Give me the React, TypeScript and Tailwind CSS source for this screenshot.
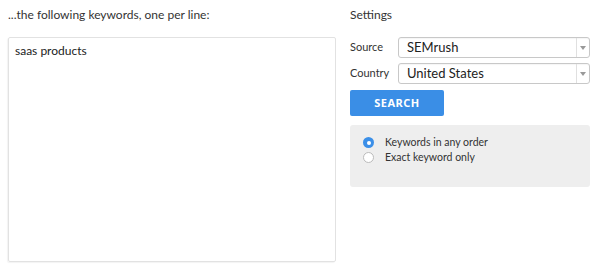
const Select = ({ value }: { value: string }) => (
  <div className="flex-1 flex h-[21px] border border-[#c8c8c8] rounded-[3px] bg-white shadow-[inset_0_1px_1px_rgba(0,0,0,0.04)]">
    <span className="flex-1 pl-[8px] text-[13px] leading-[19px] text-[#222]">{value}</span>
    <span className="w-[13px] border-l border-[#e0e0e0] flex items-center justify-center">
      <svg width="6" height="4" viewBox="0 0 6 4"><path d="M0 0h6L3 4z" fill="#999" /></svg>
    </span>
  </div>
)

const Radio = ({ checked, label }: { checked?: boolean; label: string }) => (
  <div className="flex items-center h-[15px]">
    {checked ? (
      <span className="w-[11px] h-[11px] rounded-full bg-[#3b8fe8] flex items-center justify-center">
        <span className="w-[4px] h-[4px] rounded-full bg-white" />
      </span>
    ) : (
      <span className="w-[11px] h-[11px] rounded-full border border-[#bbb] bg-white" />
    )}
    <span className="ml-[11px] text-[10.5px] text-[#333]">{label}</span>
  </div>
)

export default function App() {
  return (
    <div className="w-[600px] h-[272px] bg-white flex font-['Lato',sans-serif] text-[#333]">
      <div className="w-[328px] ml-[8px] flex flex-col">
        <p className="mt-[6px] text-[12px] leading-[18px]">...the following keywords, one per line:</p>
        <div className="mt-[13px] h-[225px] border border-[#e2e2e2] rounded-[2px] shadow-[-1px_1px_1px_rgba(0,0,0,0.05)] px-[6px] py-[5px]">
          <p className="text-[12px] leading-[16px] text-[#222]">saas products</p>
        </div>
      </div>
      <div className="w-[240px] ml-[14px] flex flex-col">
        <p className="mt-[6px] text-[12px] leading-[18px]">Settings</p>
        <div className="mt-[13px] flex items-center">
          <span className="w-[48px] text-[11px]">Source</span>
          <Select value="SEMrush" />
        </div>
        <div className="mt-[5px] flex items-center">
          <span className="w-[48px] text-[11px]">Country</span>
          <Select value="United States" />
        </div>
        <button className="mt-[6px] w-[94px] h-[26px] rounded-[2px] bg-[#3a8ee6] text-white text-[11px] font-bold tracking-[0.5px] font-['Noto_Sans',sans-serif]">
          SEARCH
        </button>
        <div className="mt-[9px] h-[62px] rounded-[3px] bg-[#eeeeee] pl-[13px] pt-[10px] flex flex-col">
          <Radio checked label="Keywords in any order" />
          <Radio label="Exact keyword only" />
        </div>
      </div>
    </div>
  )
}
